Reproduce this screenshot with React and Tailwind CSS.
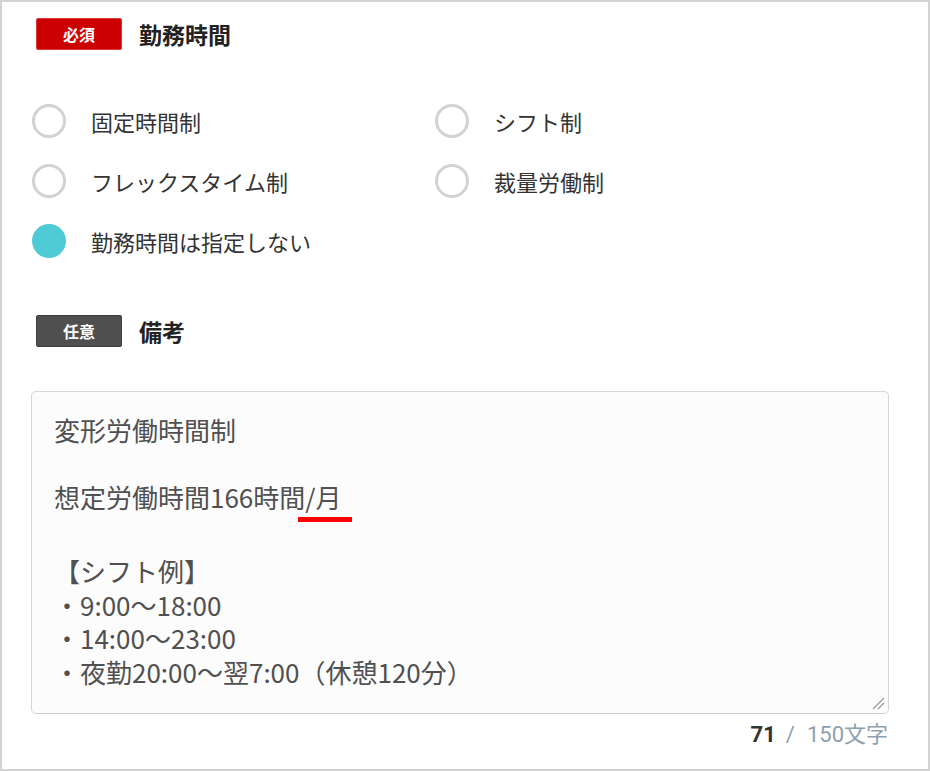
import React from "react";

function Badge({ label, tone }) {
  const cls =
    tone === "red"
      ? "bg-[#cc0000] border-[#d83a3a]"
      : "bg-[#4f4f4f] border-[#3d3d3d]";
  return (
    <div
      className={`ml-1 flex h-[32px] w-[86px] items-center justify-center rounded-[2px] border text-[16px] font-bold text-white ${cls}`}
    >
      {label}
    </div>
  );
}

function Radio({ label, checked }) {
  return (
    <div className="flex h-[60px] items-center gap-[25px]">
      {checked ? (
        <div className="h-[34px] w-[34px] shrink-0 rounded-full bg-[#4ecbd4]" />
      ) : (
        <div className="h-[34px] w-[34px] shrink-0 rounded-full border-[3px] border-[#d2d2d2] bg-white" />
      )}
      <span className="text-[22px] leading-none text-[#333]">{label}</span>
    </div>
  );
}

export default function App() {
  return (
    <div className="box-border h-[771px] w-[930px] overflow-hidden border-2 border-[#d3d3d3] bg-white pl-[30px] pt-[16px] font-['Noto_Sans_CJK_JP','Noto_Sans',sans-serif]">
      <div className="flex items-center gap-[17px]">
        <Badge label="必須" tone="red" />
        <span className="text-[23px] font-bold leading-none text-[#222]">勤務時間</span>
      </div>

      <div className="mt-[41px] grid grid-cols-[403px_1fr]">
        <Radio label="固定時間制" />
        <Radio label="シフト制" />
        <Radio label="フレックスタイム制" />
        <Radio label="裁量労働制" />
        <Radio label="勤務時間は指定しない" checked />
      </div>

      <div className="mt-[44px] flex items-center gap-[17px]">
        <Badge label="任意" tone="gray" />
        <span className="text-[23px] font-bold leading-none text-[#222]">備考</span>
      </div>

      <div className="relative ml-[-1px] mt-[44px] box-border h-[323px] w-[858px] rounded-[5px] border border-[#d6d6d6] border-b-[#cfcfcf] bg-[#fcfcfc] pl-[22px] pt-[21px] text-[26px] text-[#505050]">
        <div className="h-[33.5px] leading-[33.5px]">変形労働時間制</div>
        <div className="h-[33.5px]" />
        <div className="h-[33.5px] leading-[33.5px]">想定労働時間166時間/月</div>
        <div className="h-[40.5px]" />
        <div className="h-[33.5px] leading-[33.5px]">【シフト例】</div>
        <div className="h-[33.5px] leading-[33.5px]">・9:00～18:00</div>
        <div className="h-[33.5px] leading-[33.5px]">・14:00～23:00</div>
        <div className="h-[33.5px] leading-[33.5px]">・夜勤20:00～翌7:00（休憩120分）</div>

        <div className="absolute left-[266px] top-[125px] h-[5px] w-[54px] bg-[#ff0000]" />

        <svg
          className="absolute bottom-[3px] right-[3px]"
          width="14"
          height="14"
          viewBox="0 0 14 14"
        >
          <path d="M13 2 L2 13" stroke="#9a9a9a" strokeWidth="1.2" />
          <path d="M13 7 L7 13" stroke="#9a9a9a" strokeWidth="1.2" />
        </svg>
      </div>

      <div className="mt-[6px] flex w-[856px] items-baseline justify-end font-['Roboto','Noto_Sans_CJK_JP',sans-serif] text-[22px] leading-[30px]">
        <span className="font-bold text-[#333]">71</span>
        <span className="ml-[10px] text-[#8e9fae]">/</span>
        <span className="ml-[12px] text-[#8e9fae]">150文字</span>
      </div>
    </div>
  );
}
